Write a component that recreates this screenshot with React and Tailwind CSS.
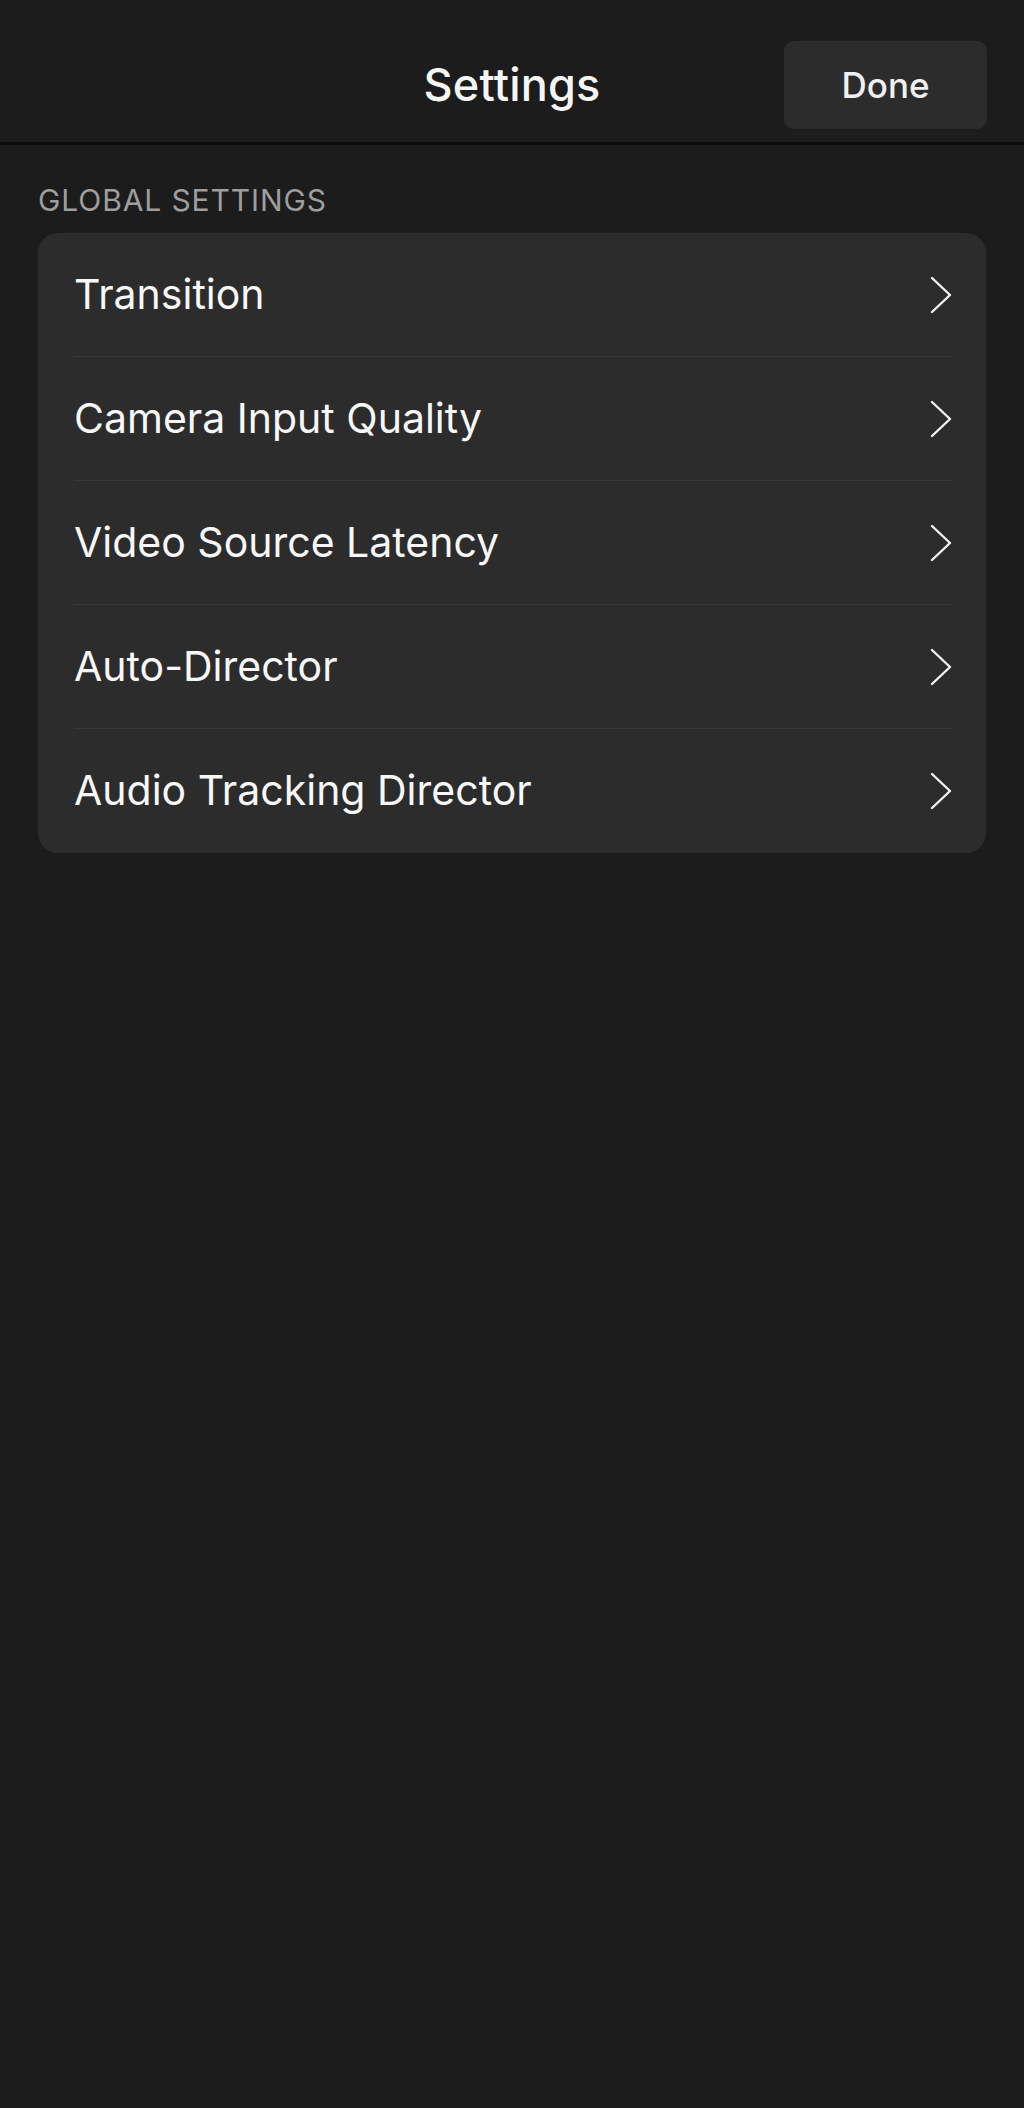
import React from 'react';

const ITEMS = [
  'Transition',
  'Camera Input Quality',
  'Video Source Latency',
  'Auto-Director',
  'Audio Tracking Director',
];

const Chevron = () => (
  <svg width="22" height="38" viewBox="0 0 22 38" fill="none" className="shrink-0">
    <path d="M2 2 L20 19 L2 36" stroke="#f2f2f2" strokeWidth="2.4" strokeLinecap="round" strokeLinejoin="round" />
  </svg>
);

export default function App() {
  return (
    <div className="min-h-[2108px] bg-[#1c1c1c] text-white font-['Inter','Liberation_Sans',sans-serif]">
      {/* Header */}
      <header className="relative h-[145px] border-b-[3px] border-[#0b0b0b] flex items-center justify-center">
        <h1 className="text-[45px] font-medium tracking-[0.2px] text-[#f5f5f5] mt-[28px]">Settings</h1>
        <button className="absolute right-[37px] top-[41px] w-[203px] h-[88px] rounded-[10px] bg-[#2c2c2c] text-[35px] font-medium text-[#f0f0f0]">
          Done
        </button>
      </header>

      <main className="px-[38px]">
        <h2 className="mt-[35px] mb-[13px] text-[30px] text-[#9e9e9e] tracking-[0.9px] uppercase leading-[40px]">
          Global Settings
        </h2>

        <div className="rounded-[20px] bg-[#2c2c2c]">
          {ITEMS.map((label, i) => (
            <div key={label} className="pl-[36px] pr-[34px]">
              <div
                className={`h-[124px] flex items-center justify-between ${
                  i < ITEMS.length - 1 ? 'border-b border-[#383838]' : ''
                }`}
              >
                <span className="text-[41px] text-[#f7f7f7]">{label}</span>
                <Chevron />
              </div>
            </div>
          ))}
        </div>
      </main>
    </div>
  );
}
